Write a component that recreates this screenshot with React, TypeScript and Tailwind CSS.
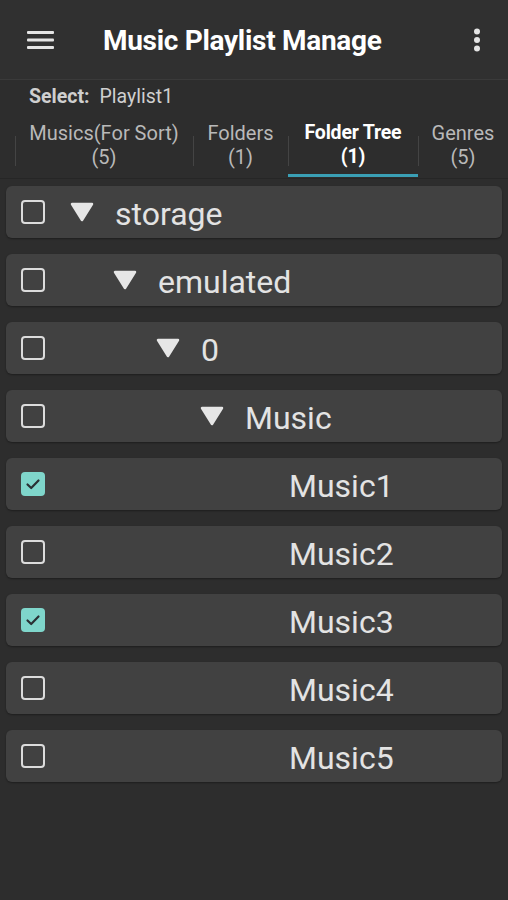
import React from "react";

const rows: { label: string; level: number; folder: boolean; checked: boolean }[] = [
  { label: "storage", level: 0, folder: true, checked: false },
  { label: "emulated", level: 1, folder: true, checked: false },
  { label: "0", level: 2, folder: true, checked: false },
  { label: "Music", level: 3, folder: true, checked: false },
  { label: "Music1", level: 4, folder: false, checked: true },
  { label: "Music2", level: 4, folder: false, checked: false },
  { label: "Music3", level: 4, folder: false, checked: true },
  { label: "Music4", level: 4, folder: false, checked: false },
  { label: "Music5", level: 4, folder: false, checked: false },
];

const indents = ["w-[0px]", "w-[43px]", "w-[86px]", "w-[130px]", "w-[219px]"];

function Checkbox({ checked }: { checked: boolean }) {
  if (checked) {
    return (
      <div className="w-[24px] h-[24px] rounded-[4px] bg-[#7fd6cb] flex items-center justify-center shrink-0">
        <svg width="16" height="16" viewBox="0 0 16 16">
          <path d="M2.5 8.5 L6.2 12 L13.5 4.5" fill="none" stroke="#2a2f33" strokeWidth="2.2" strokeLinecap="round" strokeLinejoin="round" />
        </svg>
      </div>
    );
  }
  return <div className="w-[24px] h-[24px] rounded-[4px] border-[2.5px] border-[#dcdcdc] shrink-0" />;
}

function Triangle() {
  return (
    <svg width="24" height="20" viewBox="0 0 24 20" className="shrink-0">
      <path d="M2 2 L22 2 L12 18 Z" fill="#e6e6e6" stroke="#e6e6e6" strokeWidth="2.5" strokeLinejoin="round" />
    </svg>
  );
}

export default function App() {
  return (
    <div className="w-[508px] h-[900px] bg-[#2d2d2d] text-[#e0e0e0] overflow-hidden" style={{ fontFamily: "Roboto, 'Noto Sans', sans-serif" }}>
      {/* App bar */}
      <div className="h-[80px] bg-[#303030] flex items-center border-b border-[#3a3a3a]">
        <div className="w-[103px] flex items-center pl-[27px]">
          <svg width="27" height="20" viewBox="0 0 27 20">
            <rect x="0" y="1" width="27" height="3" rx="1" fill="#e4e4e4" />
            <rect x="0" y="8.5" width="27" height="3" rx="1" fill="#e4e4e4" />
            <rect x="0" y="16" width="27" height="3" rx="1" fill="#e4e4e4" />
          </svg>
        </div>
        <div className="flex-1 text-[28px] font-bold text-white tracking-[-0.3px] pt-[3px]">Music Playlist Manage</div>
        <div className="w-[60px] flex justify-center pr-[3px]">
          <svg width="8" height="24" viewBox="0 0 8 24">
            <circle cx="4" cy="3.5" r="3" fill="#e4e4e4" />
            <circle cx="4" cy="12" r="3" fill="#e4e4e4" />
            <circle cx="4" cy="20.5" r="3" fill="#e4e4e4" />
          </svg>
        </div>
      </div>
      {/* Select line */}
      <div className="h-[29px] flex items-center pl-[29px] text-[19.5px] text-[#cfcfcf] pt-[5px]">
        <span className="font-bold">Select:</span>
        <span className="ml-[10px]">Playlist1</span>
      </div>
      {/* Tabs */}
      <div className="h-[70px] flex items-stretch pl-[15px] border-b border-[#262626] pt-[2px]">
        <div className="w-[178px] flex flex-col items-center justify-center text-[20px] leading-[24px] text-[#b9b9b9] relative">
          <div className="absolute left-0 top-[25px] bottom-[12px] w-px bg-[#444]" />
          <div>Musics(For Sort)</div>
          <div>(5)</div>
        </div>
        <div className="w-[95px] flex flex-col items-center justify-center text-[20px] leading-[24px] text-[#b9b9b9] relative">
          <div className="absolute left-0 top-[25px] bottom-[12px] w-px bg-[#444]" />
          <div>Folders</div>
          <div>(1)</div>
        </div>
        <div className="w-[130px] flex flex-col items-center justify-center text-[19.5px] leading-[24px] text-white font-bold relative tracking-[-0.2px]">
          <div className="absolute left-0 top-[25px] bottom-[12px] w-px bg-[#444]" />
          <div>Folder Tree</div>
          <div>(1)</div>
          <div className="absolute left-0 right-0 bottom-[1px] h-[3px] bg-[#3a9fb5]" />
        </div>
        <div className="flex-1 flex flex-col items-center justify-center text-[20px] leading-[24px] text-[#b9b9b9] relative">
          <div className="absolute left-0 top-[25px] bottom-[12px] w-px bg-[#444]" />
          <div className="whitespace-nowrap">Genres</div>
          <div>(5)</div>
        </div>
      </div>
      {/* Tree */}
      <div className="flex flex-col gap-[16px] px-[6px] pt-[7px]">
        {rows.map((r, i) => (
          <div key={i} className="h-[52px] bg-[#414141] rounded-[6px] flex items-center pl-[15px] shadow-[0_1px_2px_rgba(0,0,0,0.35)]">
            <Checkbox checked={r.checked} />
            <div className="w-[25px] shrink-0" />
            <div className={`${indents[r.level]} shrink-0`} />
            {r.folder && (
              <>
                <Triangle />
                <div className="w-[21px] shrink-0" />
              </>
            )}
            <span className="text-[32px] text-[#e3e3e3] leading-none pt-[3px]">{r.label}</span>
          </div>
        ))}
      </div>
    </div>
  );
}
